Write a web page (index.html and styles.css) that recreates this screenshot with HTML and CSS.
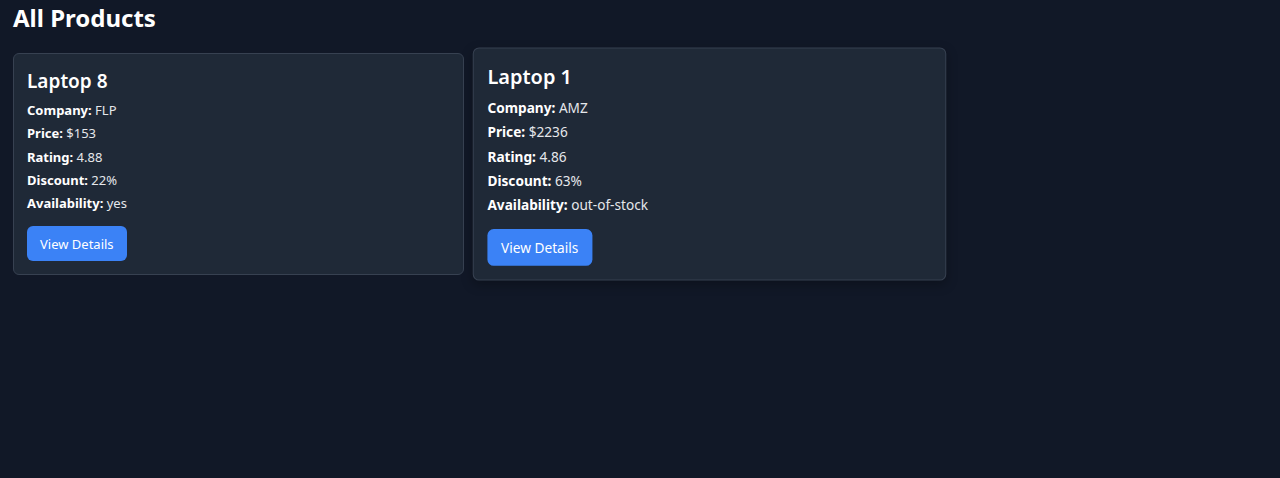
FILE: index.html
```html
<!DOCTYPE html>
<html lang="en">
<head>
<meta charset="utf-8">
<title>All Products</title>
<link rel="stylesheet" href="styles.css">
</head>
<body>
<main class="page">
  <h1 class="page-title">All Products</h1>
  <div class="grid">
    <div class="card">
      <h2 class="card-title">Laptop 8</h2>
      <p class="row"><strong>Company:</strong> FLP</p>
      <p class="row"><strong>Price:</strong> $153</p>
      <p class="row"><strong>Rating:</strong> 4.88</p>
      <p class="row"><strong>Discount:</strong> 22%</p>
      <p class="row"><strong>Availability:</strong> yes</p>
      <button class="btn">View Details</button>
    </div>
    <div class="card card-hover">
      <h2 class="card-title">Laptop 1</h2>
      <p class="row"><strong>Company:</strong> AMZ</p>
      <p class="row"><strong>Price:</strong> $2236</p>
      <p class="row"><strong>Rating:</strong> 4.86</p>
      <p class="row"><strong>Discount:</strong> 63%</p>
      <p class="row"><strong>Availability:</strong> out-of-stock</p>
      <button class="btn">View Details</button>
    </div>
  </div>
</main>
</body>
</html>
```
FILE: styles.css
```css
* { box-sizing: border-box; }
html, body {
  margin: 0;
  min-height: 100%;
  background: #111827;
  color: #f3f4f6;
  font-family: "Noto Sans", "Open Sans", sans-serif;
}
body {
  min-height: 100vh;
}
.page {
  padding: 4px 13px 40px;
}
.page-title {
  margin: 0 0 21px 0;
  font-size: 24px;
  line-height: 28px;
  font-weight: 700;
  color: #ffffff;
}
.grid {
  display: grid;
  grid-template-columns: 451px 451px;
  gap: 20px;
  align-items: start;
}
.card {
  background: #1f2937;
  border: 1px solid #374151;
  border-radius: 6px;
  padding: 13px;
  display: flex;
  flex-direction: column;
  align-items: flex-start;
}
.card-hover {
  transform: scale(1.05);
  box-shadow: 0 4px 10px rgba(0, 0, 0, 0.25);
}
.card-title {
  margin: 0 0 6px 0;
  font-size: 19px;
  line-height: 28px;
  font-weight: 600;
  color: #ffffff;
}
.row {
  margin: 0 0 4px 0;
  font-size: 13px;
  line-height: 19.3px;
  color: #e5e7eb;
}
.row strong {
  color: #ffffff;
  font-weight: 700;
}
.btn {
  margin-top: 9px;
  background: #3b82f6;
  color: #ffffff;
  border: none;
  border-radius: 6px;
  padding: 0 13px;
  height: 35px;
  font-family: inherit;
  font-size: 13px;
  cursor: pointer;
}
```
